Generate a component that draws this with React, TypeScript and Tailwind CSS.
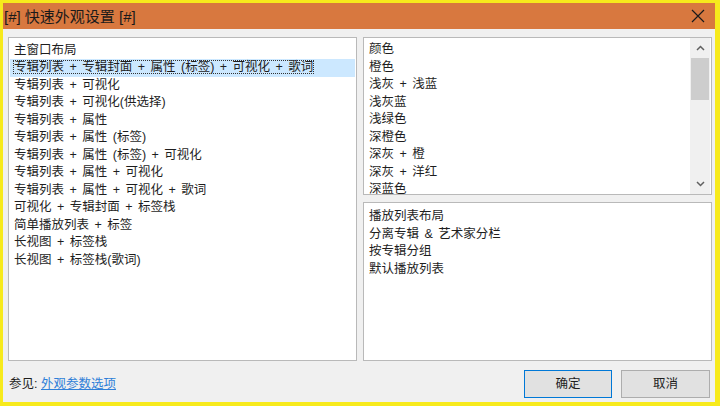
import { useState } from "react";

const font = "font-['Liberation_Sans','Noto_Sans_CJK_SC',sans-serif]";

const mainLayouts = [
  "主窗口布局",
  "专辑列表 + 专辑封面 + 属性 (标签) + 可视化 + 歌词",
  "专辑列表 + 可视化",
  "专辑列表 + 可视化(供选择)",
  "专辑列表 + 属性",
  "专辑列表 + 属性 (标签)",
  "专辑列表 + 属性 (标签) + 可视化",
  "专辑列表 + 属性 + 可视化",
  "专辑列表 + 属性 + 可视化 + 歌词",
  "可视化 + 专辑封面 + 标签栈",
  "简单播放列表 + 标签",
  "长视图 + 标签栈",
  "长视图 + 标签栈(歌词)",
];

const colours = [
  "颜色",
  "橙色",
  "浅灰 + 浅蓝",
  "浅灰蓝",
  "浅绿色",
  "深橙色",
  "深灰 + 橙",
  "深灰 + 洋红",
  "深蓝色",
  "深绿色",
];

const playlistLayouts = ["播放列表布局", "分离专辑 & 艺术家分栏", "按专辑分组", "默认播放列表"];

const Row = ({ text, selected, onClick }: { text: string; selected?: boolean; onClick?: () => void }) => (
  <div
    onClick={onClick}
    className={`h-[17.5px] leading-[17.5px] pl-[4px] whitespace-nowrap [word-spacing:2px] ${selected ? "bg-[#cce8ff]" : ""}`}
  >
    <span className={selected ? "outline outline-1 outline-dotted outline-[#333] -outline-offset-1 px-[1px] -ml-[1px]" : ""}>
      {text}
    </span>
  </div>
);

const App = () => {
  const [sel, setSel] = useState(1);

  return (
    <div className={`w-[720px] h-[406px] bg-[#f7ea1c] pl-[3px] pr-[5px] pt-[3px] pb-[4px] ${font}`}>
      <div className="flex flex-col h-full bg-[#f0f0f0]">
        {/* title bar */}
        <div className="h-[26px] bg-[#d8783f] flex items-center pl-[1px] pr-[10px] shrink-0">
          <span className="text-[15px] text-[#1a1a1a] leading-none">[#] 快速外观设置 [#]</span>
          <svg className="ml-auto" width="14" height="14" viewBox="0 0 14 14">
            <path d="M1 1 L13 13 M13 1 L1 13" stroke="#1a1a1a" strokeWidth="1.2" fill="none" />
          </svg>
        </div>

        <div className="flex-1 flex flex-col pl-[5px] pr-[3px] pt-[8px] text-[12.5px] text-[#1e1e1e]">
          <div className="flex gap-[6px] h-[324px]">
            {/* main layouts */}
            <div className="w-[349px] bg-white border border-[#b9b9b9] pt-[3.5px] px-[1px]">
              {mainLayouts.map((t, i) => (
                <Row key={t} text={t} selected={i === sel} onClick={() => setSel(i)} />
              ))}
            </div>

            <div className="w-[349px] flex flex-col gap-[7px]">
              {/* colours with scrollbar */}
              <div className="h-[158px] bg-white border border-[#b9b9b9] flex overflow-hidden">
                <div className="flex-1 pt-[3px] px-[1px] overflow-hidden">
                  {colours.map((t) => (
                    <Row key={t} text={t} />
                  ))}
                </div>
                <div className="w-[20px] bg-[#f0f0f0] flex flex-col mr-[1px]">
                  <div className="h-[20px] flex items-center justify-center">
                    <svg width="9" height="6" viewBox="0 0 9 6">
                      <path d="M1 5 L4.5 1.5 L8 5" stroke="#606060" strokeWidth="1.5" fill="none" />
                    </svg>
                  </div>
                  <div className="h-[42px] bg-[#cdcdcd] mx-[1px]" />
                  <div className="flex-1" />
                  <div className="h-[20px] flex items-center justify-center">
                    <svg width="9" height="6" viewBox="0 0 9 6">
                      <path d="M1 1 L4.5 4.5 L8 1" stroke="#606060" strokeWidth="1.5" fill="none" />
                    </svg>
                  </div>
                </div>
              </div>

              {/* playlist layouts */}
              <div className="flex-1 bg-white border border-[#b9b9b9] pt-[5px] px-[1px]">
                {playlistLayouts.map((t) => (
                  <Row key={t} text={t} />
                ))}
              </div>
            </div>
          </div>

          {/* footer */}
          <div className="flex items-center pt-[9px] pr-[2px]">
            <span className="pl-[1px] text-[#1e1e1e]">
              参见: <a className="text-[#2f7fd8] underline cursor-pointer">外观参数选项</a>
            </span>
            <button className="ml-auto w-[88px] h-[28px] bg-[#e1e1e1] border border-[#0078d7] text-[#1e1e1e]">
              确定
            </button>
            <button className="ml-[9px] w-[89px] h-[28px] bg-[#e1e1e1] border border-[#adadad] text-[#1e1e1e]">
              取消
            </button>
          </div>
        </div>
      </div>
    </div>
  );
};

export default App;
